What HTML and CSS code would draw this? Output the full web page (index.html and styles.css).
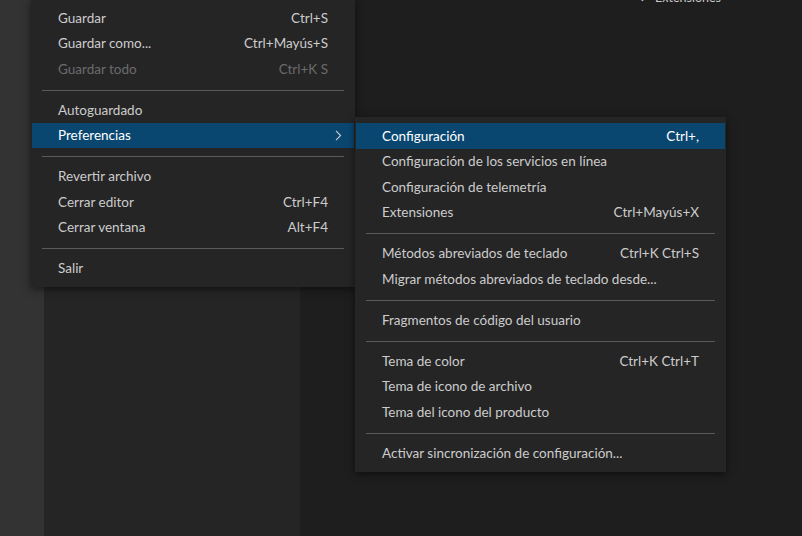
FILE: index.html
```html
<!DOCTYPE html>
<html lang="es">
<head>
<meta charset="utf-8">
<title>Menú Archivo</title>
<link rel="stylesheet" href="styles.css">
</head>
<body>
<div class="workbench">
  <div class="activitybar"></div>
  <div class="sidebar"></div>
  <div class="editor">
    <div class="peek"><span class="peek-mark">✓</span>Extensiones</div>
  </div>

  <div class="menu menu-main">
    <div class="item"><span class="label">Guardar</span><span class="key">Ctrl+S</span><span class="sub"></span></div>
    <div class="item"><span class="label">Guardar como...</span><span class="key">Ctrl+Mayús+S</span><span class="sub"></span></div>
    <div class="item disabled"><span class="label">Guardar todo</span><span class="key">Ctrl+K S</span><span class="sub"></span></div>
    <div class="sep"></div>
    <div class="item"><span class="label">Autoguardado</span><span class="key"></span><span class="sub"></span></div>
    <div class="item active"><span class="label">Preferencias</span><span class="key"></span><span class="sub"><svg width="7" height="11" viewBox="0 0 7 11"><path d="M1 0.8 L5.6 5.5 L1 10.2" fill="none" stroke="#cccccc" stroke-width="1.1"/></svg></span></div>
    <div class="sep"></div>
    <div class="item"><span class="label">Revertir archivo</span><span class="key"></span><span class="sub"></span></div>
    <div class="item"><span class="label">Cerrar editor</span><span class="key">Ctrl+F4</span><span class="sub"></span></div>
    <div class="item"><span class="label">Cerrar ventana</span><span class="key">Alt+F4</span><span class="sub"></span></div>
    <div class="sep"></div>
    <div class="item"><span class="label">Salir</span><span class="key"></span><span class="sub"></span></div>
  </div>

  <div class="menu menu-sub">
    <div class="item active"><span class="label">Configuración</span><span class="key">Ctrl+,</span><span class="sub"></span></div>
    <div class="item"><span class="label">Configuración de los servicios en línea</span><span class="key"></span><span class="sub"></span></div>
    <div class="item"><span class="label">Configuración de telemetría</span><span class="key"></span><span class="sub"></span></div>
    <div class="item"><span class="label">Extensiones</span><span class="key">Ctrl+Mayús+X</span><span class="sub"></span></div>
    <div class="sep"></div>
    <div class="item"><span class="label">Métodos abreviados de teclado</span><span class="key">Ctrl+K Ctrl+S</span><span class="sub"></span></div>
    <div class="item"><span class="label">Migrar métodos abreviados de teclado desde...</span><span class="key"></span><span class="sub"></span></div>
    <div class="sep"></div>
    <div class="item"><span class="label">Fragmentos de código del usuario</span><span class="key"></span><span class="sub"></span></div>
    <div class="sep"></div>
    <div class="item"><span class="label">Tema de color</span><span class="key">Ctrl+K Ctrl+T</span><span class="sub"></span></div>
    <div class="item"><span class="label">Tema de icono de archivo</span><span class="key"></span><span class="sub"></span></div>
    <div class="item"><span class="label">Tema del icono del producto</span><span class="key"></span><span class="sub"></span></div>
    <div class="sep"></div>
    <div class="item"><span class="label">Activar sincronización de configuración...</span><span class="key"></span><span class="sub"></span></div>
  </div>
</div>
</body>
</html>
```

FILE: styles.css
```css
* { box-sizing: border-box; }
html, body {
  margin: 0;
  padding: 0;
  width: 802px;
  height: 536px;
  overflow: hidden;
  background: #1e1e1e;
  font-family: "Lato", "Open Sans", sans-serif;
  font-size: 13.5px;
  color: #cccccc;
}
.workbench {
  position: relative;
  display: flex;
  width: 802px;
  height: 536px;
}
.activitybar {
  width: 44px;
  background: #333333;
}
.sidebar {
  width: 256px;
  background: #252526;
}
.editor {
  flex: 1;
  background: #1e1e1e;
  overflow: hidden;
}
.peek {
  margin-top: -9px;
  padding-left: 340px;
  line-height: 13px;
  font-size: 12.5px;
  color: #cccccc;
  white-space: nowrap;
}
.peek-mark {
  display: inline-block;
  width: 15px;
  font-size: 9px;
}

.menu {
  position: absolute;
  background: #252526;
  padding: 6px 1px;
  box-shadow: 0 2px 8px rgba(0, 0, 0, 0.55);
}
.menu-main {
  left: 31px;
  top: -1px;
  width: 324px;
}
.menu-sub {
  left: 355px;
  top: 117px;
  width: 371px;
}
.item {
  display: flex;
  align-items: center;
  height: 25.5px;
  padding: 0 12px 0 26px;
  white-space: nowrap;
}
.item.active {
  background: #094771;
  color: #ffffff;
}
.item.disabled { color: #6b6b6b; }
.label { flex: 1; }
.key { text-align: right; }
.sub {
  width: 14px;
  display: flex;
  justify-content: flex-end;
  align-items: center;
}
.sub svg { display: block; }
.sep {
  height: 1px;
  margin: 8px 10px 6.5px;
  background: #5a5a5a;
}
```
